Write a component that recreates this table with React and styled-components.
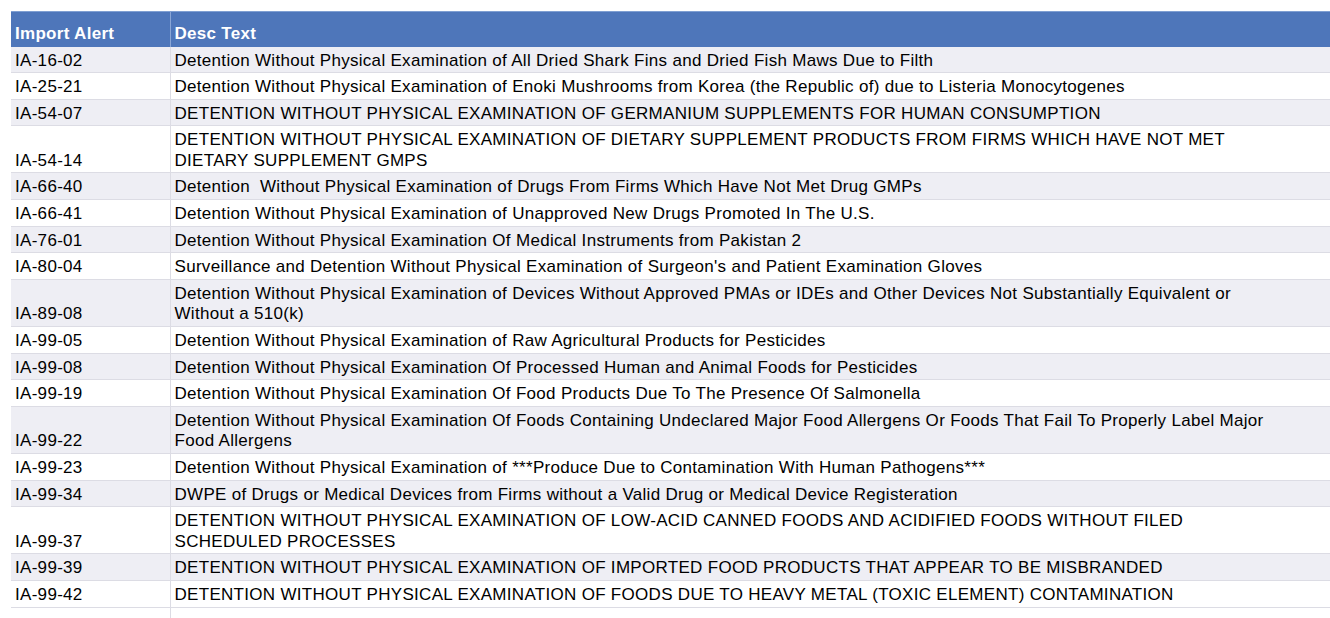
import React from "react";
import styled, { createGlobalStyle } from "styled-components";

const GlobalStyle = createGlobalStyle`
  html, body {
    margin: 0;
    padding: 0;
    background: #ffffff;
  }
  body {
    font-family: "Liberation Sans", Arial, Helvetica, sans-serif;
    overflow: hidden;
  }
`;

const Page = styled.div`
  padding: 11px 0 0 11px;
  width: 1330px;
  height: 618px;
  box-sizing: border-box;
  overflow: hidden;
`;

const Table = styled.table`
  border-collapse: collapse;
  table-layout: fixed;
  width: 1330px;
  font-size: 17px;
  letter-spacing: 0.3px;
  color: #000000;
`;

const HeadCell = styled.th`
  background: #4e76ba;
  color: #ffffff;
  font-weight: bold;
  text-align: left;
  vertical-align: bottom;
  height: 35px;
  box-sizing: border-box;
  line-height: 20px;
  padding: 0 4px 3px 4px;
  border-top: 1px solid #7f9fd2;
  border-left: ${(p) => (p.$divider ? "1.5px solid #8aa6d6" : "none")};
  width: ${(p) => p.$width || "auto"};
  white-space: nowrap;
`;

const Row = styled.tr`
  background: ${(p) => (p.$striped ? "#eeeef4" : "#ffffff")};
`;

const Cell = styled.td`
  vertical-align: bottom;
  line-height: 20.6px;
  padding: 4px 4px 1px 4px;
  border-bottom: 1.5px solid #dcdce4;
  border-left: ${(p) => (p.$divider ? "1.5px solid #dcdce4" : "none")};
  white-space: nowrap;
  overflow: hidden;
`;

const EmptyCell = styled(Cell)`
  height: 20px;
  border-bottom: none;
`;

const alerts = [
  ["IA-16-02", ["Detention Without Physical Examination of All Dried Shark Fins and Dried Fish Maws Due to Filth"]],
  ["IA-25-21", ["Detention Without Physical Examination of Enoki Mushrooms from Korea (the Republic of) due to Listeria Monocytogenes"]],
  ["IA-54-07", ["DETENTION WITHOUT PHYSICAL EXAMINATION OF GERMANIUM SUPPLEMENTS FOR HUMAN CONSUMPTION"]],
  ["IA-54-14", ["DETENTION WITHOUT PHYSICAL EXAMINATION OF DIETARY SUPPLEMENT PRODUCTS FROM FIRMS WHICH HAVE NOT MET", "DIETARY SUPPLEMENT GMPS"]],
  ["IA-66-40", ["Detention\u00a0 Without Physical Examination of Drugs From Firms Which Have Not Met Drug GMPs"]],
  ["IA-66-41", ["Detention Without Physical Examination of Unapproved New Drugs Promoted In The U.S."]],
  ["IA-76-01", ["Detention Without Physical Examination Of Medical Instruments from Pakistan 2"]],
  ["IA-80-04", ["Surveillance and Detention Without Physical Examination of Surgeon's and Patient Examination Gloves"]],
  ["IA-89-08", ["Detention Without Physical Examination of Devices Without Approved PMAs or IDEs and Other Devices Not Substantially Equivalent or", "Without a 510(k)"]],
  ["IA-99-05", ["Detention Without Physical Examination of Raw Agricultural Products for Pesticides"]],
  ["IA-99-08", ["Detention Without Physical Examination Of Processed Human and Animal Foods for Pesticides"]],
  ["IA-99-19", ["Detention Without Physical Examination Of Food Products Due To The Presence Of Salmonella"]],
  ["IA-99-22", ["Detention Without Physical Examination Of Foods Containing Undeclared Major Food Allergens Or Foods That Fail To Properly Label Major", "Food Allergens"]],
  ["IA-99-23", ["Detention Without Physical Examination of ***Produce Due to Contamination With Human Pathogens***"]],
  ["IA-99-34", ["DWPE of Drugs or Medical Devices from Firms without a Valid Drug or Medical Device Registeration"]],
  ["IA-99-37", ["DETENTION WITHOUT PHYSICAL EXAMINATION OF LOW-ACID CANNED FOODS AND ACIDIFIED FOODS WITHOUT FILED", "SCHEDULED PROCESSES"]],
  ["IA-99-39", ["DETENTION WITHOUT PHYSICAL EXAMINATION OF IMPORTED FOOD PRODUCTS THAT APPEAR TO BE MISBRANDED"]],
  ["IA-99-42", ["DETENTION WITHOUT PHYSICAL EXAMINATION OF FOODS DUE TO HEAVY METAL (TOXIC ELEMENT) CONTAMINATION"]],
];

export default function App() {
  return (
    <Page>
      <GlobalStyle />
      <Table>
        <thead>
          <tr>
            <HeadCell $width="159px">Import Alert</HeadCell>
            <HeadCell $divider>Desc Text</HeadCell>
          </tr>
        </thead>
        <tbody>
          {alerts.map(([code, lines], i) => (
            <Row key={code} $striped={i % 2 === 0}>
              <Cell>{code}</Cell>
              <Cell $divider>
                {lines.map((line, j) => (
                  <React.Fragment key={j}>
                    {j > 0 && <br />}
                    {line}
                  </React.Fragment>
                ))}
              </Cell>
            </Row>
          ))}
          <Row>
            <EmptyCell />
            <EmptyCell $divider />
          </Row>
        </tbody>
      </Table>
    </Page>
  );
}
